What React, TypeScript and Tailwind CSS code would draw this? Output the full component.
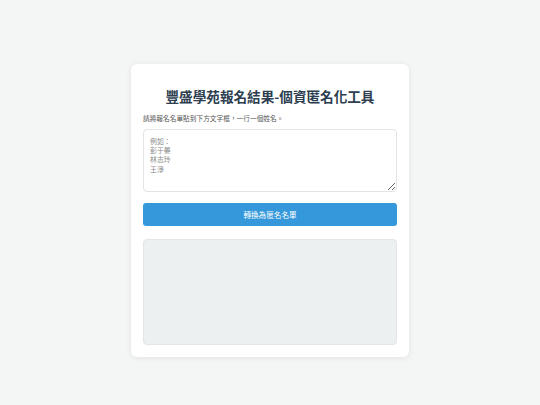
import { useState } from "react";

const font = { fontFamily: '"Noto Sans CJK TC", "Noto Sans", sans-serif' };

export default function App() {
  const [names, setNames] = useState("");
  const [result, setResult] = useState("");

  const convert = () => {
    const lines = names
      .split("\n")
      .map((n) => n.trim())
      .filter(Boolean)
      .map((n) => (n.length > 1 ? n[0] + "○" + n.slice(2) : n));
    setResult(lines.join("\n"));
  };

  return (
    <div className="min-h-[405px] w-full bg-[#f4f6f6] pt-16" style={font}>
      <div className="mx-auto w-[278px] rounded-md bg-white p-3 shadow-[0_1px_6px_rgba(0,0,0,0.08)]">
        <h1 className="mt-[10px] text-center text-[13.6px] leading-[20px] font-bold text-[#2c3e50]">
          豐盛學苑報名結果-個資匿名化工具
        </h1>
        <p className="mt-[7px] text-[6.7px] leading-[10px] text-[#555]">
          請將報名名單貼到下方文字框，一行一個姓名。
        </p>
        <textarea
          value={names}
          onChange={(e) => setNames(e.target.value)}
          placeholder={"例如：\n彭于晏\n林志玲\n王淨"}
          className="mt-[6px] block h-[63px] w-full rounded-[4px] border border-[#e3e3e3] px-[6px] pt-[7px] pb-[6px] text-[6.9px] leading-[9.2px] text-[#333] placeholder:text-[#8a8a8a] outline-none"
        />
        <button
          onClick={convert}
          className="mt-[11px] block h-[23px] w-full rounded-[3px] bg-[#3498db] text-[7.6px] text-white"
        >
          轉換為匿名名單
        </button>
        <div className="mt-[13px] h-[106px] w-full whitespace-pre-wrap rounded-[4px] border border-[#e2e6e8] bg-[#ecf0f1] p-[6px] text-[6.7px] leading-[9px] text-[#333]">
          {result}
        </div>
      </div>
    </div>
  );
}
